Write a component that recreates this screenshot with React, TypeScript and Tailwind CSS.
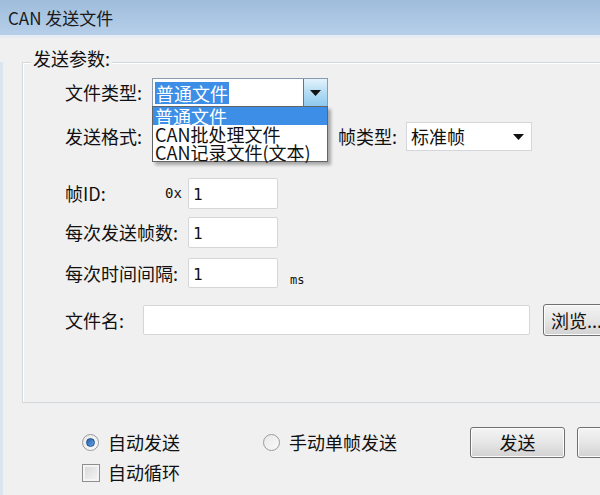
const cjk = { fontFamily: '"Noto Sans CJK SC", "Noto Sans", sans-serif' };
const mono = { fontFamily: '"DejaVu Sans Mono", "Liberation Mono", monospace' };

const Arrow = () => (
  <svg width="11" height="6" viewBox="0 0 11 6">
    <path d="M0 0 H11 L5.5 6 Z" fill="#111" />
  </svg>
);

const TextBox = ({ value, className }: { value?: string; className: string }) => (
  <div
    className={`h-full shrink-0 bg-white border border-[#d4d6da] rounded-[2px] pl-[4px] flex items-start pt-[4px] text-[16px] text-[#111] ${className}`}
    style={mono}
  >
    {value}
  </div>
);

const Button = ({ label, className }: { label: string; className: string }) => (
  <div
    className={`shrink-0 rounded-[3px] border border-[#707070] bg-gradient-to-b from-[#f4f4f4] via-[#e6e6e6] to-[#d2d2d2] shadow-[inset_0_0_0_1px_#fcfcfc] flex items-center justify-center text-[18px] text-[#111] ${className}`}
  >
    {label}
  </div>
);

const Radio = ({ checked }: { checked?: boolean }) => (
  <div className="w-[17px] h-[17px] shrink-0 rounded-full border border-[#9a9a9a] bg-gradient-to-br from-[#e8e8e8] to-[#fafafa] flex items-center justify-center">
    {checked && (
      <div className="w-[9px] h-[9px] rounded-full bg-gradient-to-br from-[#2a5fa8] to-[#5fa8ec] border border-[#1d4f8f]" />
    )}
  </div>
);

export default function App() {
  return (
    <div className="w-[600px] h-[495px] overflow-hidden bg-[#f0f0f0] text-[#111]" style={cjk}>
      {/* title bar */}
      <div className="h-[35px] bg-gradient-to-b from-[#9fbcdb] via-[#aac6e3] to-[#b6cfe9] flex items-center pl-[8px] text-[17px] text-[#1a1a1a]">
        CAN 发送文件
      </div>
      <div className="h-[3px] bg-[#e7ecf3]" />

      <div className="border-l-[3px] border-[#dbe5ef] h-[457px]">
        {/* group box */}
        <div className="relative ml-[19px] mt-[24px] w-[600px] h-[341px] border border-[#d3d8dc] shadow-[inset_1px_1px_0_#ffffff]">
          <div className="absolute -top-[17px] left-[8px] px-[2px] bg-[#f0f0f0] text-[18px] leading-[24px]">
            发送参数:
          </div>

          <div className="pl-[42px] pt-[15px] text-[18px]">
            <div className="flex items-center h-[29px]">
              <div className="w-[87px] shrink-0">文件类型:</div>
              <div className="w-[176px] shrink-0 h-full bg-white border border-[#8a9bb0] flex items-center pl-[2px]">
                <span className="bg-[#3c8ee6] text-white leading-[22px] px-[1px]">普通文件</span>
                <div className="ml-auto w-[24px] h-full border-l border-[#3c7fb1] bg-gradient-to-b from-[#e3f3fc] via-[#b4dcf4] to-[#8ec9ee] flex items-center justify-center">
                  <Arrow />
                </div>
              </div>
            </div>

            <div className="flex items-center h-[29px] mt-[15px]">
              <div className="w-[87px] shrink-0">发送格式:</div>
              <div className="w-[176px] shrink-0 h-full bg-white border border-[#d4d6da]" />
              <div className="ml-[10px] w-[68px] shrink-0">帧类型:</div>
              <div className="w-[126px] shrink-0 h-full bg-white border border-[#d4d6da] flex items-center pl-[4px]">
                标准帧
                <div className="ml-auto mr-[7px]">
                  <Arrow />
                </div>
              </div>
            </div>

            <div className="flex items-center h-[31px] mt-[27px]">
              <div className="w-[100px] shrink-0">帧ID:</div>
              <div className="w-[23px] shrink-0 text-[14px]" style={mono}>0x</div>
              <TextBox value="1" className="w-[90px]" />
            </div>

            <div className="flex items-center h-[31px] mt-[8px]">
              <div className="w-[123px] shrink-0">每次发送帧数:</div>
              <TextBox value="1" className="w-[90px]" />
            </div>

            <div className="flex items-center h-[30px] mt-[10px]">
              <div className="w-[123px] shrink-0">每次时间间隔:</div>
              <TextBox value="1" className="w-[90px]" />
              <div className="ml-[12px] self-end text-[12px] leading-[14px] mb-[1px]" style={mono}>ms</div>
            </div>

            <div className="flex items-center h-[30px] mt-[17px]">
              <div className="w-[78px] shrink-0">文件名:</div>
              <TextBox className="w-[387px]" />
              <Button label="浏览..." className="ml-[13px] w-[72px] h-[32px] justify-start pl-[7px]" />
            </div>
          </div>

          {/* open dropdown list */}
          <div className="absolute left-[129px] top-[43px] w-[176px] h-[56px] bg-white border border-[#646464] shadow-[3px_3px_3px_rgba(0,0,0,0.3)] text-[18px] leading-[18px]">
            <div className="bg-[#3c8ee6] text-white h-[18px] pl-[2px]">普通文件</div>
            <div className="h-[18px] pl-[2px]">CAN批处理文件</div>
            <div className="h-[18px] pl-[2px]">CAN记录文件(文本)</div>
          </div>
        </div>

        {/* bottom controls */}
        <div className="pl-[79px] mt-[24px] text-[18px]">
          <div className="flex items-center h-[31px]">
            <div className="w-[181px] shrink-0 flex items-center">
              <Radio checked />
              <span className="ml-[9px]">自动发送</span>
            </div>
            <div className="w-[207px] shrink-0 flex items-center">
              <Radio />
              <span className="ml-[9px]">手动单帧发送</span>
            </div>
            <Button label="发送" className="w-[95px] h-[31px]" />
            <Button label="关闭" className="ml-[12px] w-[95px] h-[31px]" />
          </div>
          <div className="flex items-center h-[19px] mt-[5px]">
            <div className="w-[18px] h-[18px] shrink-0 border border-[#8e8f8f] bg-gradient-to-br from-[#d6d6d6] to-[#f7f7f7] shadow-[inset_0_0_0_2px_#f4f4f4]" />
            <span className="ml-[8px]">自动循环</span>
          </div>
        </div>
      </div>
    </div>
  );
}
